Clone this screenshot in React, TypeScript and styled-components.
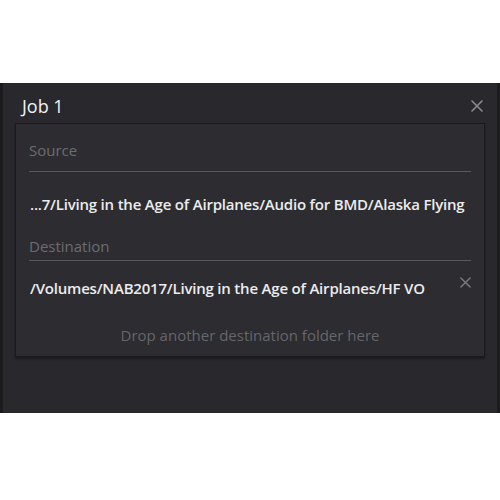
import styled, { createGlobalStyle } from "styled-components";

const GlobalStyle = createGlobalStyle`
  html, body {
    margin: 0;
    padding: 0;
    background: #ffffff;
  }
  * {
    box-sizing: border-box;
  }
`;

// small cross used for close / remove buttons
const CrossIcon = ({ size, color }: { size: number; color: string }) => (
  <svg width={size} height={size} viewBox="0 0 12 12">
    <path
      d="M1 1 L11 11 M11 1 L1 11"
      stroke={color}
      strokeWidth={1.6}
      strokeLinecap="round"
      fill="none"
    />
  </svg>
);

export default function App() {
  return (
    <>
      <GlobalStyle />
      <StyledPage>
        <StyledPanel>
          <StyledHeader>
            <StyledTitle>Job 1</StyledTitle>
            <StyledCloseButton type="button">
              <CrossIcon size={12} color="#8c8c8e" />
            </StyledCloseButton>
          </StyledHeader>
          <StyledCard>
            <StyledLabel $top={16} $bottom={11}>
              Source
            </StyledLabel>
            <StyledPathRow $top={22}>
              <StyledPath>
                ...7/Living in the Age of Airplanes/Audio for BMD/Alaska Flying
              </StyledPath>
            </StyledPathRow>
            <StyledLabel $top={22} $bottom={4}>
              Destination
            </StyledLabel>
            <StyledPathRow $top={17}>
              <StyledPath>
                /Volumes/NAB2017/Living in the Age of Airplanes/HF VO
              </StyledPath>
              <StyledRemoveButton type="button">
                <CrossIcon size={11} color="#7a7a7d" />
              </StyledRemoveButton>
            </StyledPathRow>
            <StyledDropHint>Drop another destination folder here</StyledDropHint>
          </StyledCard>
        </StyledPanel>
      </StyledPage>
    </>
  );
}

const StyledPage = styled.div`
  width: 500px;
  height: 500px;
  padding-top: 83px;
  background: #ffffff;
  font-family: "Open Sans", "DejaVu Sans", sans-serif;
`;

const StyledPanel = styled.div`
  height: 330px;
  background: #28282d;
  border-left: 3px solid #1c1c1f;
  border-right: 3px solid #1c1c1f;
  padding: 0 12px;
  display: flex;
  flex-direction: column;
`;

const StyledHeader = styled.div`
  height: 40px;
  padding: 13px 2px 0 7px;
  display: flex;
  align-items: flex-start;
  justify-content: space-between;
`;

const StyledTitle = styled.div`
  font-size: 18px;
  line-height: 20px;
  color: #f2f2f2;
`;

const StyledCloseButton = styled.button`
  background: none;
  border: none;
  padding: 0;
  margin-top: 4px;
  display: flex;
  cursor: pointer;
`;

const StyledCard = styled.div`
  height: 234px;
  background: #2c2c31;
  border: 1px solid #1a1a1d;
  box-shadow: 0 2px 2px rgba(0, 0, 0, 0.35);
  padding: 0 13px;
  display: flex;
  flex-direction: column;
`;

const StyledLabel = styled.div<{ $top: number; $bottom: number }>`
  padding-top: ${(p) => p.$top}px;
  padding-bottom: ${(p) => p.$bottom}px;
  line-height: 20px;
  font-size: 15px;
  color: #6c6c70;
  border-bottom: 1px solid #58585c;
`;

const StyledPathRow = styled.div<{ $top: number }>`
  margin-top: ${(p) => p.$top}px;
  height: 20px;
  display: flex;
  align-items: center;
  justify-content: space-between;
`;

const StyledPath = styled.div`
  font-size: 15px;
  font-weight: 600;
  line-height: 20px;
  letter-spacing: -0.2px;
  color: #ececec;
  white-space: nowrap;
  padding-left: 1px;
`;

const StyledRemoveButton = styled.button`
  background: none;
  border: none;
  padding: 0;
  margin-top: -12px;
  display: flex;
  cursor: pointer;
`;

const StyledDropHint = styled.div`
  margin-top: 27px;
  line-height: 20px;
  font-size: 15px;
  color: #66666a;
  text-align: center;
`;
